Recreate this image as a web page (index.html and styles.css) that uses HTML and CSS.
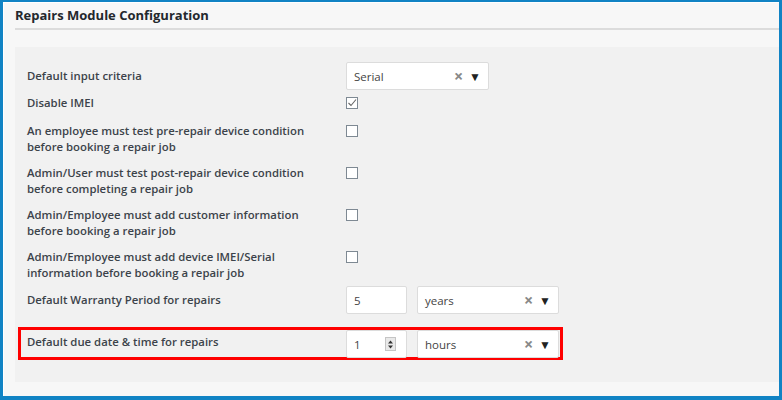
FILE: index.html
```html
<html><head>
  <title>Repairs Module Configuration</title>
  <link rel="stylesheet" href="styles.css">
</head>
<body>
  <div class="frame">
    <h2 class="page-title">Repairs Module Configuration</h2>

    <div class="panel">
      <div class="row row-select">
        <label>Default input criteria</label>
        <div class="field">
          <div class="select wide">
            <span class="value">Serial</span>
            <span class="clear">&times;</span>
            <span class="arrow">&#9660;</span>
          </div>
        </div>
      </div>

      <div class="row row-single">
        <label>Disable IMEI</label>
        <div class="field">
          <span class="checkbox">
            <svg width="10" height="10" viewBox="0 0 10 10" fill="none" stroke="#666" stroke-width="1.1">
              <polyline points="1.5 5 4 7.5 9 1.5"/>
            </svg>
          </span>
        </div>
      </div>

      <div class="row">
        <label>An employee must test pre-repair device condition before booking a repair job</label>
        <div class="field"><span class="checkbox"></span></div>
      </div>

      <div class="row">
        <label>Admin/User must test post-repair device condition before completing a repair job</label>
        <div class="field"><span class="checkbox"></span></div>
      </div>

      <div class="row">
        <label>Admin/Employee must add customer information before booking a repair job</label>
        <div class="field"><span class="checkbox"></span></div>
      </div>

      <div class="row">
        <label>Admin/Employee must add device IMEI/Serial information before booking a repair job</label>
        <div class="field"><span class="checkbox"></span></div>
      </div>

      <div class="row row-select">
        <label>Default Warranty Period for repairs</label>
        <div class="field">
          <div class="number"><span class="value">5</span></div>
          <div class="select">
            <span class="value">years</span>
            <span class="clear">&times;</span>
            <span class="arrow">&#9660;</span>
          </div>
        </div>
      </div>

      <div class="row row-select highlight">
        <label>Default due date &amp; time for repairs</label>
        <div class="field">
          <div class="number">
            <span class="value">1</span>
            <span class="spinner">
              <svg width="9" height="13" viewBox="0 0 9 13">
                <polygon points="4.5 2.5 7 5.5 2 5.5" fill="#333"/>
                <polygon points="2 7.5 7 7.5 4.5 10.5" fill="#333"/>
              </svg>
            </span>
          </div>
          <div class="select">
            <span class="value">hours</span>
            <span class="clear">&times;</span>
            <span class="arrow">&#9660;</span>
          </div>
        </div>
      </div>
    </div>
  </div>
</body></html>
```

FILE: styles.css
```css
* {
  margin: 0;
  padding: 0;
  box-sizing: border-box;
  font-family: 'Open Sans', 'Liberation Sans', sans-serif;
}

body {
  background: #f7f7f7;
}

.frame {
  width: 782px;
  height: 400px;
  border-style: solid;
  border-color: #1183c4;
  border-width: 2px 3px 4px 3px;
  box-shadow: inset 1px 1px 0 #fff;
  background: #f7f7f7;
  padding: 0 0 0 12px;
}

.page-title {
  font-size: 13px;
  font-weight: 700;
  color: #23282d;
  line-height: 26px;
  border-bottom: 2px solid #dcdcdc;
  margin-bottom: 17px;
}

.panel {
  background: #f1f1f1;
  height: 335px;
  padding: 15px 0 0 12px;
}

.row {
  display: grid;
  grid-template-columns: 319px 1fr;
  align-items: start;
  padding: 4.5px 0;
}

.row label {
  font-size: 11.35px;
  font-weight: 600;
  color: #3c434a;
  line-height: 16.5px;
  padding-right: 30px;
}

.row-select {
  align-items: center;
  padding: 0;
}

.row-single {
  padding-bottom: 7px;
}

.field {
  display: flex;
  gap: 10px;
}

.checkbox {
  display: flex;
  align-items: center;
  justify-content: center;
  width: 12px;
  height: 12px;
  margin-top: 2px;
  border: 1px solid #7e8993;
  background: #fff;
}

.select,
.number {
  display: flex;
  align-items: center;
  height: 28px;
  background: #fff;
  border: 1px solid #dcdcdc;
  border-radius: 2px;
  font-size: 11.5px;
  color: #444;
  padding: 0 7px;
}

.select {
  width: 142px;
}

.select.wide {
  width: 143px;
}

.number {
  width: 61px;
}

.select .value,
.number .value {
  flex: 1;
}

.clear {
  color: #888;
  font-size: 16px;
  font-weight: 700;
  line-height: 16px;
  margin-right: 6px;
}

.arrow {
  color: #222;
  font-size: 12px;
}

.spinner {
  display: flex;
  width: 11px;
  height: 14px;
  margin-right: 3px;
  border: 1px solid #c5c5c5;
  background: #e9e9e9;
  align-items: center;
  justify-content: center;
}

.highlight {
  margin: 13px 216px 0 -9px;
  border: 3px solid #ff0000;
  padding: 0 0 0 6px;
  height: 33px;
}

.highlight label {
  margin-top: -3px;
}
```
